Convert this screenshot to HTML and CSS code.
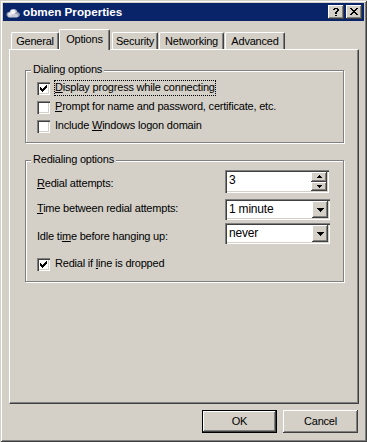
FILE: index.html
```html
<!DOCTYPE html>
<html>
<head>
<meta charset="utf-8">
<title>obmen Properties</title>
<link rel="stylesheet" href="styles.css">
</head>
<body>
<div class="window">
  <div class="titlebar">
    <svg class="title-icon" width="14" height="10" viewBox="0 0 14 10">
      <ellipse cx="4" cy="6.5" rx="3.5" ry="2.8" fill="#9aa0b4"/>
      <ellipse cx="7.5" cy="4.5" rx="3.8" ry="3.5" fill="#b4b8c8"/>
      <ellipse cx="10.5" cy="6.5" rx="3.3" ry="2.6" fill="#9aa0b4"/>
      <rect x="2" y="6" width="10" height="3.5" rx="1.5" fill="#c8ccd8"/>
      <ellipse cx="7" cy="4" rx="2.6" ry="2.2" fill="#f4f4f8"/>
      <ellipse cx="4" cy="6" rx="2" ry="1.6" fill="#e8e8f0"/>
    </svg>
    <span class="title-text">obmen Properties</span>
    <div class="title-buttons">
      <div class="tbtn">
        <svg width="6" height="8" viewBox="0 0 6 8"><path d="M1 0h4v1h-4z M0 1h2v1h-2z M4 1h2v1h-2z M4 2h2v1h-2z M3 3h2v1h-2z M2 4h2v1h-2z M2 5h2v1h-2z M2 7h2v1h-2z" fill="#000"/></svg>
      </div>
      <div class="tbtn">
        <svg width="8" height="7" viewBox="0 0 8 7"><path d="M0 0h2v1h-2z M6 0h2v1h-2z M1 1h2v1h-2z M5 1h2v1h-2z M2 2h4v1h-4z M3 3h2v1h-2z M2 4h4v1h-4z M1 5h2v1h-2z M5 5h2v1h-2z M0 6h2v1h-2z M6 6h2v1h-2z" fill="#000"/></svg>
      </div>
    </div>
  </div>

  <div class="content">
    <div class="tabs">
      <div class="tab t-general">General</div>
      <div class="tab selected t-options">Options</div>
      <div class="tab t-security">Security</div>
      <div class="tab t-networking">Networking</div>
      <div class="tab t-advanced">Advanced</div>
    </div>

    <div class="panel">
      <div class="group g1">
        <div class="legend">Dialing options</div>
        <div class="check-row">
          <span class="cb"><svg width="13" height="13" viewBox="0 0 13 13"><path d="M3 5h1v3h-1z M4 6h1v3h-1z M5 7h1v3h-1z M6 6h1v3h-1z M7 5h1v3h-1z M8 4h1v3h-1z M9 3h1v3h-1z" fill="#000"/></svg></span>
          <span class="lbl focus"><u>D</u>isplay progress while connecting</span>
        </div>
        <div class="check-row">
          <span class="cb"></span>
          <span class="lbl"><u>P</u>rompt for name and password, certificate, etc.</span>
        </div>
        <div class="check-row">
          <span class="cb"></span>
          <span class="lbl">Include <u>W</u>indows logon domain</span>
        </div>
      </div>

      <div class="group g2">
        <div class="legend">Redialing options</div>
        <div class="field-row r1">
          <span class="flabel"><u>R</u>edial attempts:</span>
          <div class="spin">
            <span class="spin-val">3</span>
            <div class="spin-btns">
              <div class="sbtn"><svg width="5" height="3" viewBox="0 0 5 3"><path d="M2 0h1v1h-1z M1 1h3v1h-3z M0 2h5v1h-5z" fill="#000"/></svg></div>
              <div class="sbtn"><svg width="5" height="3" viewBox="0 0 5 3"><path d="M0 0h5v1h-5z M1 1h3v1h-3z M2 2h1v1h-1z" fill="#000"/></svg></div>
            </div>
          </div>
        </div>
        <div class="field-row r2">
          <span class="flabel"><u>T</u>ime between redial attempts:</span>
          <div class="combo">
            <span class="combo-val">1 minute</span>
            <div class="drop"><svg width="7" height="4" viewBox="0 0 7 4"><path d="M0 0h7v1h-7z M1 1h5v1h-5z M2 2h3v1h-3z M3 3h1v1h-1z" fill="#000"/></svg></div>
          </div>
        </div>
        <div class="field-row r3">
          <span class="flabel">Idle ti<u>m</u>e before hanging up:</span>
          <div class="combo">
            <span class="combo-val">never</span>
            <div class="drop"><svg width="7" height="4" viewBox="0 0 7 4"><path d="M0 0h7v1h-7z M1 1h5v1h-5z M2 2h3v1h-3z M3 3h1v1h-1z" fill="#000"/></svg></div>
          </div>
        </div>
        <div class="check-row r4">
          <span class="cb"><svg width="13" height="13" viewBox="0 0 13 13"><path d="M3 5h1v3h-1z M4 6h1v3h-1z M5 7h1v3h-1z M6 6h1v3h-1z M7 5h1v3h-1z M8 4h1v3h-1z M9 3h1v3h-1z" fill="#000"/></svg></span>
          <span class="lbl">Redial if <u>l</u>ine is dropped</span>
        </div>
      </div>
    </div>

    <div class="buttons">
      <div class="btn default">OK</div>
      <div class="btn">Cancel</div>
    </div>
  </div>
</div>
</body>
</html>
```

FILE: styles.css
```css
* { box-sizing: border-box; }
html, body { margin: 0; padding: 0; }
body {
  width: 367px;
  height: 442px;
  overflow: hidden;
  background: #d4d0c8;
  font-family: "Liberation Sans", Arial, sans-serif;
  font-size: 11px;
  letter-spacing: -0.2px;
  color: #000;
}
u { text-decoration: underline; text-underline-offset: 1px; }

.window {
  width: 367px;
  height: 442px;
  padding: 3px;
  background: #d4d0c8;
  box-shadow: inset 1px 1px #d4d0c8, inset -1px -1px #404040, inset 2px 2px #fff, inset -2px -2px #808080;
  display: flex;
  flex-direction: column;
}

/* title bar */
.titlebar {
  height: 18px;
  flex: none;
  background: #0a246a;
  color: #fff;
  display: flex;
  align-items: center;
  padding: 0 2px 0 3px;
}
.title-icon { flex: none; margin-right: 3px; margin-top: 1px; }
.title-text {
  flex: 1;
  font-weight: bold;
  font-size: 11.7px;
  letter-spacing: 0;
  line-height: 14px;
}
.title-buttons { display: flex; gap: 2px; }
.tbtn {
  width: 16px;
  height: 14px;
  background: #d4d0c8;
  box-shadow: inset -1px -1px #404040, inset 1px 1px #fff, inset -2px -2px #808080;
  display: flex;
  align-items: center;
  justify-content: center;
  padding-bottom: 1px;
}
.tbtn svg { display: block; }

/* content */
.content {
  flex: 1;
  display: flex;
  flex-direction: column;
  padding: 8px 5px 0 6px;
}

.tabs {
  height: 20px;
  display: flex;
  align-items: flex-end;
  position: relative;
  z-index: 1;
}
.tab {
  height: 17px;
  border-top: 1px solid #fff;
  border-left: 1px solid #fff;
  border-right: 1px solid #404040;
  box-shadow: inset -1px 0 #808080;
  border-radius: 2px 2px 0 0;
  background: #d4d0c8;
  text-align: center;
  line-height: 16px;
  padding-top: 0;
}
.tab.selected {
  height: 21px;
  margin-bottom: -1px;
  padding-top: 1px;
  line-height: 16px;
}
.t-general { width: 48px; margin-left: 2px; }
.t-options { width: 51px; }
.t-security { width: 46px; margin-left: 2px; }
.t-networking { width: 65px; margin-left: 1px; }
.t-advanced { width: 60px; margin-left: 1px; }

.panel {
  height: 355px;
  flex: none;
  border-top: 1px solid #fff;
  border-left: 1px solid #fff;
  border-right: 1px solid #404040;
  border-bottom: 1px solid #404040;
  box-shadow: inset -1px -1px #808080;
  padding: 20px 14px 0 15px;
}

.group {
  position: relative;
  border: 1px solid #808080;
  box-shadow: inset 1px 1px #fff, 1px 1px #fff;
  padding-left: 11px;
}
.g1 { height: 73px; padding-top: 8px; }
.g2 { height: 122px; padding-top: 9px; margin-top: 17px; }
.legend {
  position: absolute;
  top: -8px;
  left: 5px;
  padding: 0 2px;
  background: #d4d0c8;
  line-height: 13px;
}

.check-row {
  height: 19px;
  display: flex;
  align-items: flex-start;
}
.cb {
  flex: none;
  width: 13px;
  height: 13px;
  margin-top: 3px;
  background: #fff;
  box-shadow: inset 1px 1px #808080, inset 2px 2px #404040, inset -1px -1px #fff, inset -2px -2px #d4d0c8;
}
.cb svg { display: block; }
.lbl {
  margin-left: 4px;
  margin-top: 1px;
  padding: 1px 1px 2px 1px;
  line-height: 13px;
  white-space: nowrap;
}
.focus { outline: 1px dotted #000; outline-offset: -1px; }

.field-row {
  display: flex;
  align-items: flex-start;
}
.flabel {
  width: 188px;
  flex: none;
  line-height: 13px;
  white-space: nowrap;
}
.r1 { height: 23px; }
.r1 .flabel { padding-top: 7px; }
.r2 { height: 21px; margin-top: 6px; }
.r2 .flabel { padding-top: 3px; }
.r3 { height: 21px; margin-top: 3px; }
.r3 .flabel { padding-top: 7px; }
.r4 { margin-top: 11px; }

.spin, .combo {
  background: #fff;
  box-shadow: inset 1px 1px #808080, inset 2px 2px #404040, inset -1px -1px #fff, inset -2px -2px #d4d0c8;
  padding: 2px;
  display: flex;
}
.spin { width: 104px; height: 23px; }
.combo { width: 105px; height: 21px; }
.spin-val {
  flex: 1;
  padding-left: 2px;
  font-size: 12px;
  line-height: 17px;
}
.combo-val {
  flex: 1;
  padding-left: 2px;
  font-size: 12px;
  line-height: 16px;
}
.spin-btns {
  width: 16px;
  display: flex;
  flex-direction: column;
}
.sbtn {
  flex: 1;
  background: #d4d0c8;
  box-shadow: inset -1px -1px #404040, inset 1px 1px #fff, inset -2px -2px #808080;
  display: flex;
  align-items: center;
  justify-content: center;
}
.sbtn svg, .drop svg { display: block; }
.drop {
  width: 16px;
  flex: none;
  background: #d4d0c8;
  box-shadow: inset -1px -1px #404040, inset 1px 1px #fff, inset -2px -2px #808080;
  display: flex;
  align-items: center;
  justify-content: center;
}

.buttons {
  display: flex;
  justify-content: flex-end;
  gap: 6px;
  padding: 6px 1px 0 0;
}
.btn {
  width: 75px;
  height: 23px;
  background: #d4d0c8;
  box-shadow: inset -1px -1px #404040, inset 1px 1px #fff, inset -2px -2px #808080;
  text-align: center;
  line-height: 22px;
}
.btn.default {
  border: 1px solid #000;
  line-height: 20px;
}
```
